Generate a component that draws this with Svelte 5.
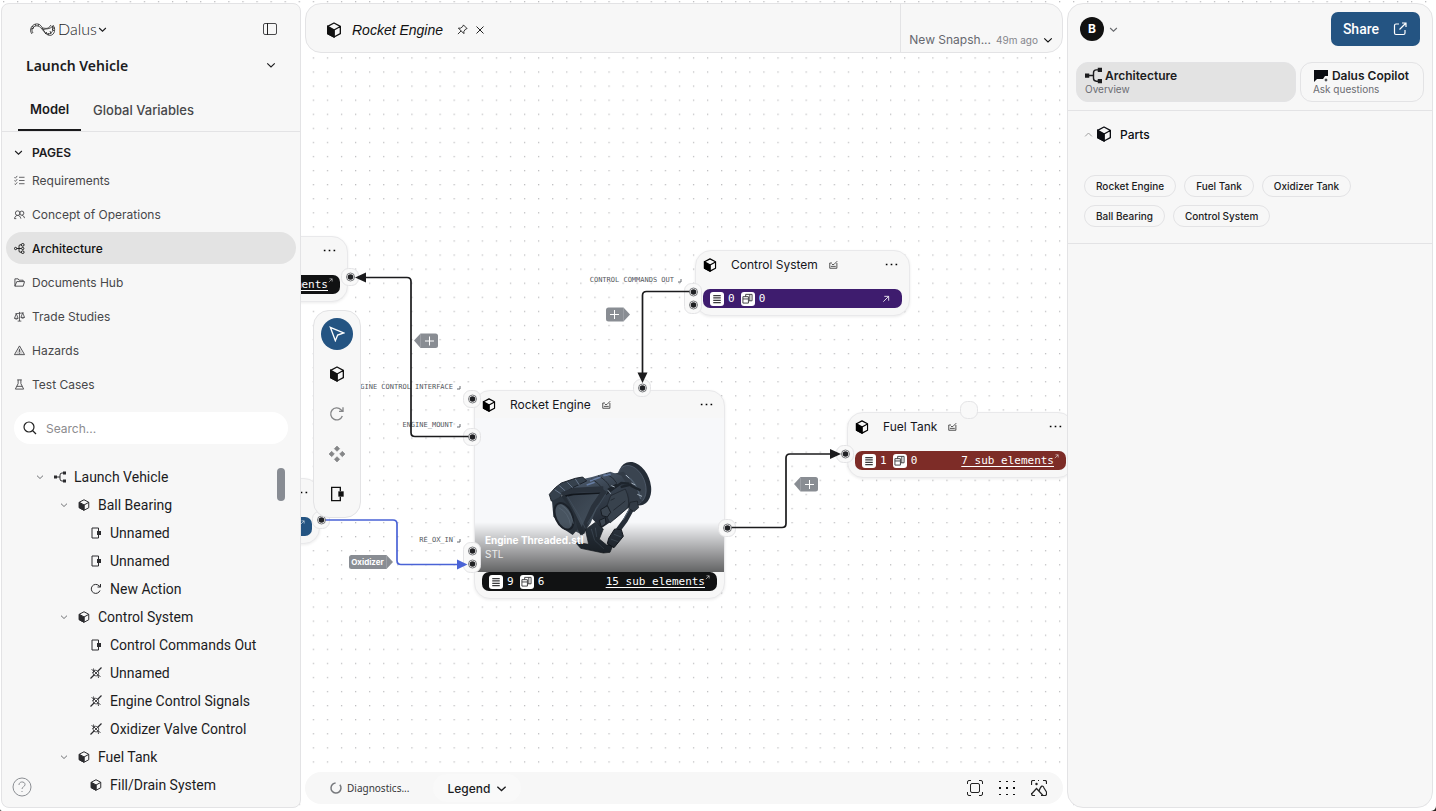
<script>
  const pages = [
    { name: 'Requirements', icon: 'checks' },
    { name: 'Concept of Operations', icon: 'people' },
    { name: 'Architecture', icon: 'share', active: true },
    { name: 'Documents Hub', icon: 'folder' },
    { name: 'Trade Studies', icon: 'scales' },
    { name: 'Hazards', icon: 'hazard' },
    { name: 'Test Cases', icon: 'flask' }
  ];
  const tree = [
    { name: 'Launch Vehicle', level: 0, icon: 'tree' },
    { name: 'Ball Bearing', level: 1, icon: 'cube' },
    { name: 'Unnamed', level: 2, icon: 'port' },
    { name: 'Unnamed', level: 2, icon: 'port' },
    { name: 'New Action', level: 2, icon: 'action' },
    { name: 'Control System', level: 1, icon: 'cube' },
    { name: 'Control Commands Out', level: 2, icon: 'port' },
    { name: 'Unnamed', level: 2, icon: 'link' },
    { name: 'Engine Control Signals', level: 2, icon: 'link' },
    { name: 'Oxidizer Valve Control', level: 2, icon: 'link' },
    { name: 'Fuel Tank', level: 1, icon: 'cube' },
    { name: 'Fill/Drain System', level: 2, icon: 'cube' }
  ];
  const parts = ['Rocket Engine', 'Fuel Tank', 'Oxidizer Tank', 'Ball Bearing', 'Control System'];
  const tools = [
    { name: 'Select', icon: 'cursor', active: true },
    { name: 'Part', icon: 'cube' },
    { name: 'Action', icon: 'action', muted: true },
    { name: 'Group', icon: 'diamonds', muted: true },
    { name: 'Port', icon: 'port' }
  ];
  const nodes = [
    { id: 'a', x: 274, y: 236, w: 74, tone: 'black', sub: 'ments' },
    { id: 'b', x: 246, y: 478, w: 74, tone: 'blue' },
    { id: 'c', name: 'Control System', x: 695, y: 250, w: 215, tone: 'purple', attrs: 0, ports: 0 },
    { id: 'd', name: 'Rocket Engine', x: 474, y: 390, w: 251, tone: 'black', attrs: 9, ports: 6, sub: '15 sub elements', model: true },
    { id: 'e', name: 'Fuel Tank', x: 847, y: 412, w: 227, tone: 'red', attrs: 1, ports: 0, sub: '7 sub elements' }
  ];
  const docks = [
    { x: 350, y: [277] }, { x: 321, y: [520] }, { x: 472, y: [399] }, { x: 472, y: [437] },
    { x: 472, y: [551, 564] }, { x: 642, y: [388] }, { x: 693, y: [292, 305] },
    { x: 727, y: [528] }, { x: 845, y: [454] }
  ];
  const portLabels = [
    { text: 'CONTROL COMMANDS OUT', x: 674, y: 282 },
    { text: 'ENGINE CONTROL INTERFACE', x: 453, y: 389 },
    { text: 'ENGINE_MOUNT', x: 453, y: 427 },
    { text: 'RE_OX_IN', x: 453, y: 542 }
  ];
</script>

{#snippet icon(name, size)}
  <svg class="ico" width={size} height={size} viewBox="0 0 24 24" fill="none" stroke="currentColor" stroke-width="2" aria-hidden="true">
    {#if name === 'cube'}
      <path d="M12 1.5 21.5 6.5V17.5L12 22.5 2.5 17.5V6.5Z M12 12 21.5 6.8 M12 12V22" stroke-linejoin="round" />
      <path d="M2.5 6.5 12 11.8V22.5L2.5 17.5Z" fill="currentColor" />
    {:else if name === 'chevron'}
      <path d="M3 8 12 16.500l9-8.500" stroke-width="2.800" />
    {:else if name === 'chevron-up'}
      <path d="M3 17 12 8l9 9" stroke-width="2.500" />
    {:else if name === 'tree'}
      <path d="M3 12H12M20 4H16Q12 4 12 8V16Q12 20 16 20H20" />
      <path d="M0 9H6V15H0ZM18 1H24V7H18ZM18 17H24V23H18Z" fill="currentColor" stroke="none" />
    {:else if name === 'port'}
      <path d="M17 8V2H4V22H17V16" />
      <path d="M14 8H22V16H14Z" fill="currentColor" stroke="none" />
    {:else if name === 'action'}
      <path d="M20 15A9 9 0 1 1 18 5.500L21 8M21 2V8H15" />
    {:else if name === 'link'}
      <path d="M1 23 9 15M15 9 23 1" stroke-width="2.400" />
      <path d="M8 8 16 16M8 8C5 11 6 15 9 17M9 17C12 18 15 18 16 16M8 8C9 6 12 6 15 8C18 11 18 14 16 16M3 5 8 8M7 3 8 8M21 19 16 16M17 22 16 16M8 8 5 12M9 15 15 9" stroke-width="1.700" />
    {:else if name === 'checks'}
      <path d="M1 5 3 7 7 2M1 12 3 14 7 9M1 19 3 21 7 16M11 5H23M11 12H23M11 19H23" stroke-width="1.800" />
    {:else if name === 'people'}
      <circle cx="8" cy="9" r="5" /><circle cx="17" cy="9" r="4.500" />
      <path d="M1 21C2 16 5 14 8 14S14 16 15 21M17 14C20 14 22 16 23 20M1 21H5" />
    {:else if name === 'share'}
      <circle cx="3.500" cy="12" r="2.500" /><circle cx="19" cy="4" r="3" /><circle cx="19" cy="12" r="2.500" /><circle cx="19" cy="20" r="3" />
      <path d="M6 12H16M16 4H13Q11 4 11 7V17Q11 20 13 20H16" />
    {:else if name === 'folder'}
      <path d="M2 20V4H9L11 7H20V10M2 20 6 10H23L20 20Z" stroke-linejoin="round" />
    {:else if name === 'scales'}
      <path d="M12 2V22M8 22H16M3 6 21 4M5 6 1 16H9ZM19 4 15 14H23ZM1 16Q5 20 9 16M15 14Q19 18 23 14" stroke-width="1.800" />
    {:else if name === 'hazard'}
      <path d="M12 2 23 21H1ZM12 9V15M12 17V19" stroke-linejoin="round" />
      <path d="M12 6 19 19H5Z" fill="currentColor" opacity=".25" stroke="none" />
    {:else if name === 'flask'}
      <path d="M7 2H17M9 2V10L3 22H21L15 10V2M6 16H18" />
    {:else if name === 'diamonds'}
      <path d="M12 0 16 4 12 8 8 4ZM12 16 16 20 12 24 8 20ZM4 8 8 12 4 16 0 12ZM20 8 24 12 20 16 16 12Z" fill="currentColor" stroke="currentColor" stroke-width="1" stroke-linejoin="round" />
    {:else if name === 'cursor'}
      <path d="M2 2 22 10.500 13 13.500 9.500 22Z" stroke-linejoin="miter" />
    {:else if name === 'edit'}
      <path d="M8 8H2V22H21V8M5 17H18M8 12H13L22 3" stroke-width="2.200" />
    {:else if name === 'lines'}
      <path d="M3 4H21M3 9.500H21M3 15H21M3 20.500H21" stroke-width="3" />
    {:else if name === 'blocks'}
      <path d="M2 8H14V22H2ZM8 8V3H22V17H14M17 3V17M2 13H14" />
    {:else if name === 'dots'}
      <path d="M1.500 10.500H4.500V13.500H1.500ZM10.500 10.500H13.500V13.500H10.500ZM19.500 10.500H22.500V13.500H19.500Z" fill="currentColor" stroke="none" />
    {:else if name === 'arrow'}
      <path d="M4 20 20 4M7 4H20V17" stroke-width="2.500" />
    {/if}
  </svg>
{/snippet}

<div class="app">
  <div class="canvas">
    <svg class="layer" aria-hidden="true">
      <defs>
        <pattern id="dots" width="20" height="20" patternUnits="userSpaceOnUse" patternTransform="translate(3 1) scale(0.704)">
          <circle cx="1" cy="1" r="0.8" fill="#77777b" />
        </pattern>
      </defs>
      <rect width="100%" height="100%" fill="url(#dots)" />
    </svg>

    <svg class="layer labels">
      {#each portLabels as l}
        <text x={l.x} y={l.y} text-anchor="end">{l.text}</text>
        <path d="M{l.x + 4} {l.y}h3v-3" fill="none" stroke="#666a70" />
      {/each}
    </svg>

    {#each nodes as n (n.id)}
      <article class="node" style="left:{n.x}px;top:{n.y}px;width:{n.w}px">
        <header>
          {#if n.name}
            <span class="cube">{@render icon('cube', 14)}</span>
            <h3>{n.name}</h3>
            <span class="edit">{@render icon('edit', 9)}</span>
          {/if}
          <button class="more" aria-label="Node menu">{@render icon('dots', 13)}</button>
        </header>
        {#if n.model}
          <div class="model">
            <svg width="116" height="106" viewBox="0 0 348 318" aria-hidden="true">
              <defs>
                <linearGradient id="metal" x1="0" y1="0" x2=".5" y2="1">
                  <stop offset="0" stop-color="#5b6b82" /><stop offset=".45" stop-color="#3a4552" /><stop offset="1" stop-color="#232a34" />
                </linearGradient>
                <linearGradient id="plate" x1="0" y1="0" x2="1" y2="1">
                  <stop offset="0" stop-color="#313a45" /><stop offset="1" stop-color="#4a5764" />
                </linearGradient>
              </defs>
              <ellipse cx="278" cy="86" rx="46" ry="68" transform="rotate(-22 278 86)" fill="#252d37" />
              <ellipse cx="269" cy="89" rx="40" ry="60" transform="rotate(-22 269 89)" fill="#3a4450" stroke="#566373" stroke-width="2" />
              <path d="M205 58 245 50Q280 80 300 140L262 158 232 150Z" fill="#323b46" />
              <path d="M250 60Q285 80 296 132" stroke="#505e6e" stroke-width="4" fill="none" />
              <path d="M62 112 96 78 150 66 205 50 238 62Q268 100 262 155L222 190 178 220 120 160Z" fill="url(#metal)" />
              <path d="M22 118 40 98 58 84 100 70 122 66 134 78 96 96 60 118 44 140 28 138Z" fill="#36414d" stroke="#1c222a" stroke-width="3" />
              <path d="M38 104 56 116M52 92 70 108M76 82 92 98M100 72 112 90" stroke="#66758a" stroke-width="3" />
              <path d="M148 72Q172 84 182 104M168 62Q194 76 204 96M192 56Q216 68 224 84" stroke="#232a33" stroke-width="3" fill="none" />
              <path d="M144 78 176 66M184 62 206 58M134 90 158 82" stroke="#7f9cd0" stroke-width="5" opacity=".6" />
              <path d="M190 118 238 84 262 86M198 104 226 88M236 96 270 88M266 92 296 106" stroke="#1d242c" stroke-width="7" fill="none" />
              <path d="M252 60 262 70M198 106 206 116M208 92 218 96M268 84 280 90M286 118 300 124" stroke="#a4b0bc" stroke-width="3" />
              <path d="M206 122 250 102Q264 132 258 158L204 204 188 172Z" fill="#38424d" stroke="#1c222a" stroke-width="2" />
              <path d="M206 136 218 130M214 166 250 138" stroke="#232a33" stroke-width="3" />
              <path d="M176 164 196 152 206 172 196 186 180 182ZM172 196 190 188 192 206 178 216Z" fill="#3b4550" stroke="#171c23" stroke-width="3" />
              <path d="M66 118 186 106 146 204 122 240 98 228Z" fill="url(#plate)" />
              <path d="M60 120 96 106 184 102" stroke="#2a323c" stroke-width="16" fill="none" />
              <path d="M66 124 94 118 180 114" stroke="#12171d" stroke-width="5" fill="none" />
              <path d="M188 106 154 156 120 232" stroke="#2a323c" stroke-width="15" fill="none" />
              <path d="M196 110 162 164 136 206" stroke="#465361" stroke-width="2" fill="none" />
              <path d="M62 122 94 180 122 238" stroke="#262e37" stroke-width="14" fill="none" />
              <path d="M76 124 110 180 130 220" stroke="#465361" stroke-width="2" fill="none" />
              <path d="M30 138 58 124 92 170 108 222 92 240 56 216 34 184Z" fill="#2b343e" />
              <ellipse cx="66" cy="184" rx="25" ry="42" transform="rotate(-24 66 184)" fill="#485460" stroke="#1c222a" stroke-width="6" />
              <path d="M50 158Q80 172 86 212M58 150Q88 170 94 206" stroke="#5b6875" stroke-width="2" fill="none" />
              <path d="M130 224 160 202 184 222 172 252 194 270 214 268 204 292 184 294 116 280 100 262 140 268Z" fill="#29323c" stroke="#171c23" stroke-width="2" />
              <path d="M148 222 158 256 186 282M160 218 164 246" stroke="#3f4b58" stroke-width="3" fill="none" />
              <path d="M272 156 250 196 228 226" stroke="#262e38" stroke-width="15" fill="none" />
              <path d="M266 156 244 194" stroke="#5b6979" stroke-width="3" />
              <path d="M264 142 286 138 290 158 276 170 260 160Z" fill="#323b46" stroke="#171c23" stroke-width="2" />
              <path d="M218 222 238 224 244 244 216 278 196 266 200 250Z" fill="#2d3641" stroke="#171c23" stroke-width="3" />
              <path d="M206 252 228 260M216 238 238 246" stroke="#44515e" stroke-width="3" />
            </svg>
            <div class="caption"><strong>Engine Threaded.stl</strong><span>STL</span></div>
          </div>
        {/if}
        <footer class={n.tone}>
          {#if n.name}
            <i>{@render icon('lines', 10)}</i><span>{n.attrs}</span>
            <i>{@render icon('blocks', 11)}</i><span>{n.ports}</span>
          {/if}
          {#if n.sub}
            <a href="#{n.id}">{n.sub}</a><sup>{@render icon('arrow', 5)}</sup>
          {:else if n.name}
            <a class="open" href="#{n.id}" aria-label="Open element">{@render icon('arrow', 8)}</a>
          {:else}
            <sup class="end">{@render icon('arrow', 5)}</sup>
          {/if}
        </footer>
      </article>
    {/each}

    <svg class="layer" aria-hidden="true">
      <g fill="#f9f9f9" stroke="#e4e4e6">
        <rect x="960.5" y="401.5" width="17" height="17" rx="7" />
        {#each docks as d}
          <rect x={d.x - 8.5} y={d.y[0] - 8.5} width="17" height={17 + d.y[d.y.length - 1] - d.y[0]} rx="7" />
        {/each}
      </g>
      <g fill="none" stroke="#1b1b1d" stroke-width="1.7">
        <path d="M472 436.500H415Q411 436.500 411 432.500V281.500Q411 277.500 407 277.500H362" />
        <path d="M693 291.500H646.500Q642.500 291.500 642.500 295.500V376" />
        <path d="M727 527.500H782Q786 527.500 786 523.500V458Q786 454 790 454H832" />
        <path d="M321 520H393Q397 520 397 524V560.500Q397 564.500 401 564.500H460" stroke="#4a63d6" />
      </g>
      <g fill="#1b1b1d">
        <path d="M355 277.500 366 272.500V282.500Z" /><path d="M642.500 383 637.500 372.500H647.500Z" /><path d="M841 454 830 449V459Z" />
        <path d="M467.500 564.500 457 559.500V569.500Z" fill="#4a63d6" />
      </g>
      {#each docks as d}
        {#each d.y as y}
          <circle cx={d.x + 0.5} cy={y} r="4" fill="#fff" stroke="#55585c" stroke-width="0.8" />
          <circle cx={d.x + 0.5} cy={y} r="2.8" fill="#202124" />
        {/each}
      {/each}
      <g fill="#898d93">
        <path d="M414 340.500 420.500 333.500H435.500Q438 333.500 438 336V345.500Q438 348 435.500 348H420.500Z" />
        <path d="M794 484 800.500 477H815.500Q818 477 818 479.500V489Q818 491.500 815.500 491.500H800.500Z" />
        <path d="M630 314.500 623.500 307.500H608.500Q606 307.500 606 310V319Q606 321.500 608.500 321.500H623.500Z" />
        <path d="M393 562 386.500 555H351.500Q349 555 349 557.500V566.500Q349 569 351.500 569H386.500Z" />
      </g>
      <path d="M420.500 334V348M800.500 477V491M623.500 308V321M386.500 555V569" stroke="#a5a8ad" stroke-width="0.7" />
      <path d="M425 341H434M429.500 336.500V345.500M805 484.500H814M809.500 480V489M610 314.500H619M614.500 310V319" stroke="#fff" />
      <text class="tag" x="367.500" y="565" text-anchor="middle">Oxidizer</text>
    </svg>
  </div>

  <div class="shell">
    <aside class="sidebar">
      <div class="brand">
        <button class="logo">
          <svg width="27" height="15" viewBox="0 0 27 15" fill="none" stroke="#222" stroke-width="0.8" aria-hidden="true">
            <path d="M3 12C-1 7 4 1 9 2C14 3 14 11 19 13C24 15 28 9 24 3" />
            <path d="M4 11C1 7 5 3 9 4C13 5 15 12 19 12C23 12 25 8 23 4" />
            <path d="M2 7 5 6M3 4 5 6M6 2 7 4M10 2 9 4M16 12 18 10M19 13 20 11M22 12 21 9M25 9 23 7M26 6 23 6" />
            <path d="M13 6C16 6 19 8 22 3M14 8C17 6 20 8 24 4" />
          </svg>
          <span>Dalus</span>{@render icon('chevron', 9)}
        </button>
        <button aria-label="Toggle sidebar">
          <svg class="ico" width="14" height="12" viewBox="0 0 14 12" fill="none" stroke="#4a4a4c" aria-hidden="true"><rect x=".5" y=".5" width="13" height="11" rx="1.500" /><path d="M4.500 0V12" stroke="#222" /></svg>
        </button>
      </div>
      <button class="project"><span>Launch Vehicle</span>{@render icon('chevron', 10)}</button>
      <nav class="tabs"><button class="on">Model</button><button>Global Variables</button></nav>
      <button class="section">{@render icon('chevron', 9)}<span>PAGES</span></button>
      <nav class="pages">
        {#each pages as p}
          <a href="#{p.icon}" class:active={p.active}>{@render icon(p.icon, 11)}<span>{p.name}</span></a>
        {/each}
      </nav>
      <label class="search">
        <svg class="ico" width="14" height="14" viewBox="0 0 14 14" fill="none" stroke="#222" stroke-width="1.200" aria-hidden="true"><circle cx="6" cy="6" r="5" /><path d="M9.500 9.500 13 13" /></svg>
        <input type="text" placeholder="Search..." aria-label="Search" />
      </label>
      <div class="tree">
        <ul>
          {#each tree as t}
            <li class="l{t.level}">
              {#if t.level < 2}<button aria-label="Collapse">{@render icon('chevron', 8)}</button>{/if}
              <span class="kind">{@render icon(t.icon, 12)}</span>
              <span>{t.name}</span>
            </li>
          {/each}
        </ul>
        <div class="thumb"></div>
      </div>
      <button class="help" aria-label="Help">
        <svg width="20" height="20" viewBox="0 0 20 20" fill="none" stroke="#8b8e93" aria-hidden="true"><circle cx="10" cy="10" r="9" /><path d="M7 8C7 4 13 4 13 7.500C13 10 10 9.500 10 12M10 14V15" /></svg>
      </button>
    </aside>

    <main>
      <header class="topbar">
        <div class="doc">
          {@render icon('cube', 16)}<em>Rocket Engine</em>
          <button aria-label="Pin"><svg class="ico" width="11" height="11" viewBox="0 0 12 12" fill="none" stroke="#222" aria-hidden="true"><path d="M7 1 11 5 9.500 5.500 7.500 8 7.500 10.500 1.500 4.500 4 4.500 6.500 2.500ZM4.500 7.500 1 11" /></svg></button>
          <button aria-label="Close"><svg class="ico" width="8" height="8" viewBox="0 0 8 8" stroke="#222" aria-hidden="true"><path d="M.5 .5 7.500 7.500M7.500 .5 .5 7.500" /></svg></button>
        </div>
        <button class="snap"><span>New Snapsh...</span><small>49m ago</small><span class="mark">{@render icon('chevron', 10)}</span></button>
      </header>
      <div class="stage">
        <div class="toolbar">
          {#each tools as t}
            <button class:active={t.active} class:muted={t.muted} aria-label={t.name}>{@render icon(t.icon, 16)}</button>
          {/each}
        </div>
      </div>
      <footer class="dockbar">
        <div class="status">
          <span class="diag"><svg class="ico" width="12" height="12" viewBox="0 0 12 12" fill="none" stroke-width="1.500" aria-hidden="true"><circle cx="6" cy="6" r="5" stroke="#77797d" stroke-dasharray="26 6" transform="rotate(-40 6 6)" /></svg>Diagnostics...</span>
          <button class="legend">Legend {@render icon('chevron', 11)}</button>
          <span class="grow"></span>
          <button aria-label="Fit view"><svg class="ico" width="16" height="16" viewBox="0 0 16 16" fill="none" stroke="#222" aria-hidden="true"><rect x="3.500" y="3.500" width="9" height="9" rx="1.500" /><path d="M.5 4V2Q.5 .5 2 .5H4M12 .5H14Q15.500 .5 15.500 2V4M15.500 12V14Q15.500 15.500 14 15.500H12M4 15.500H2Q.5 15.500 .5 14V12" /></svg></button>
          <button aria-label="Grid"><svg class="ico" width="16" height="16" viewBox="0 0 16 16" fill="#111" aria-hidden="true"><path d="M0 1h2v1H0zM7 1h2v1H7zM14 1h2v1h-2zM0 7h2v2H0zM7 7h2v2H7zM14 7h2v2h-2zM0 14h2v1H0zM7 14h2v1H7zM14 14h2v1h-2z" /></svg></button>
          <button aria-label="Export image"><svg class="ico" width="16" height="16" viewBox="0 0 16 16" fill="none" stroke="#222" stroke-width="1.200" aria-hidden="true"><path d="M.5 5V2Q.5 .5 2 .5H4M12 .5H14Q15.500 .5 15.500 2V4M7 .5H8M.5 14 5.500 8.500 12 15.500M8 11C10 5 12 5 13 8L15.500 12V14Q15.500 15.500 14 15.500H10M4 15.500H2Q.5 15.500 .5 13" /><circle cx="5.500" cy="4" r=".6" fill="#222" /></svg></button>
        </div>
      </footer>
    </main>

    <aside class="panel">
      <div class="account">
        <button class="user"><b>B</b>{@render icon('chevron', 9)}</button>
        <button class="share">Share<svg class="ico" width="14" height="14" viewBox="0 0 14 14" fill="none" stroke="#fff" stroke-width="1.200" aria-hidden="true"><path d="M6 2H3Q1.500 2 1.500 3.500V11Q1.500 12.500 3 12.500H10.500Q12 12.500 12 11V8M6.500 7.500 13 1M9 1H13V5" /></svg></button>
      </div>
      <div class="modes">
        <button class="on"><span>{@render icon('tree', 17)}Architecture</span><small>Overview</small></button>
        <button><span><svg class="ico" width="16" height="14" viewBox="0 0 16 14" fill="#0b0d12" aria-hidden="true"><path d="M1 1H15V7H12L10 10H4L1 13ZM13 9L13.600 10.400 15 11 13.600 11.600 13 13 12.400 11.600 11 11 12.400 10.400Z" /></svg>Dalus Copilot</span><small>Ask questions</small></button>
      </div>
      <section>
        <h2><span class="fold">{@render icon('chevron-up', 9)}</span>{@render icon('cube', 16)}<span>Parts</span></h2>
        <div class="pills">{#each parts as p}<button>{p}</button>{/each}</div>
      </section>
    </aside>
  </div>
</div>

<style>
  :global(body) { margin: 0; background: #2a2521; }
  .app { position: relative; height: 100vh; overflow: hidden; background: #fff; border-radius: 0 0 5px 2px; font-family: Inter, "Liberation Sans", sans-serif; font-size: 12px; color: #1c1c1e; }
  .app * { box-sizing: border-box; }
  button { border: 0; background: none; padding: 0; font: inherit; color: inherit; display: flex; align-items: center; }
  a { color: inherit; text-decoration: none; }
  .ico { flex: none; display: block; }

  .canvas { position: absolute; inset: 0; }
  .layer { position: absolute; inset: 0; width: 100%; height: 100%; }
  .labels text { font: 7px "DejaVu Sans Mono", monospace; fill: #55585e; }
  .tag { font: 700 8px Inter, sans-serif; fill: #fff; }
  .node { position: absolute; background: #f7f7f7; border: 1px solid #e9e9eb; border-radius: 16px; box-shadow: 0 1px 3px #00000014; padding-bottom: 7px; }
  .node header { display: flex; align-items: center; height: 27px; padding: 0 11px 0 7px; color: #000; }
  .node header + footer { margin-top: 11px; }
  .node h3 { margin: 0 11px 0 14px; font-size: 12px; font-weight: 400; white-space: nowrap; color: #16161c; }
  .node .edit { color: #333; }
  .more { margin-left: auto; }
  .node footer { display: flex; align-items: center; gap: 4px; height: 19px; margin: 0 7px; padding: 0 7px; border-radius: 7px; color: #fff; font: 11px "DejaVu Sans Mono", monospace; }
  .node footer i { display: flex; align-items: center; justify-content: center; width: 14px; height: 14px; border-radius: 3px; background: #fff; color: #3a3a3c; }
  .node footer span { margin-right: 2px; }
  .node footer a { margin-left: auto; text-decoration: underline; text-underline-offset: 2px; white-space: nowrap; }
  .node footer .open { margin-right: 5px; }
  .node footer sup { margin: 0 0 8px -4px; }
  .node footer .end { margin-left: auto; }
  .black { background: #111213; }
  .blue { background: #245482; }
  .purple { background: #3e1c6e; }
  .red { background: #7d2c27; }
  .model { position: relative; display: flex; justify-content: center; height: 154px; padding: 37px 0 0 3px; background: #f7f8fa; }
  .model svg { margin-left: -2px; }
  .caption { position: absolute; inset: auto 0 0 0; display: flex; flex-direction: column; height: 50px; padding: 11px 10px 0; background: linear-gradient(#0000, #0009); color: #fff; font-size: 10px; line-height: 14px; }
  .caption strong { font-weight: 700; }
  .caption span { color: #ececec; }

  .shell { position: relative; display: flex; height: 100%; pointer-events: none; }
  .shell button, .shell a, .shell input { pointer-events: auto; }
  .sidebar { position: relative; display: flex; flex-direction: column; width: 300px; margin: 3px 0 3px 1px; background: #f7f7f7; border: 1px solid #e3e3e5; border-radius: 8px; }
  .brand { display: flex; align-items: center; justify-content: space-between; height: 48px; padding: 2px 23px 0 27px; }
  .logo span { margin: 0 1px 1px 2px; font: 300 16px Lato, sans-serif; }
  .project { height: 26px; padding: 0 24px; justify-content: space-between; font: 600 14px "Noto Sans", Inter, sans-serif; }
  .tabs { display: flex; height: 54px; padding-left: 16px; border-bottom: 1px solid #e3e3e5; font-size: 13px; font-weight: 500; color: #47474a; }
  .tabs button { padding: 11px 12px 0; }
  .tabs .on { font-weight: 600; color: #1a1a1c; border-bottom: 2px solid #1a1a1c; }
  .section { gap: 9px; height: 32px; padding: 8px 12px 0; font-weight: 600; }
  .pages { display: flex; flex-direction: column; gap: 2px; padding: 0 4px; }
  .pages a { display: flex; align-items: center; gap: 7px; height: 32px; padding: 0 8px; border-radius: 16px; color: #47474a; }
  .pages .active { background: #e3e3e3; color: #111; font-weight: 500; }
  .search { display: flex; align-items: center; gap: 9px; height: 32px; margin: 12px 12px 19px; padding: 0 9px; border-radius: 16px; background: #fff; }
  .search input { flex: 1; min-width: 0; border: 0; outline: 0; padding: 0; background: none; font: 12px Inter, sans-serif; }
  .search input::placeholder { color: #8b8b8e; }
  .tree { display: flex; flex: 1; min-height: 0; overflow: hidden; }
  ul { flex: 1; margin: 0; padding: 0; list-style: none; font: 14px Roboto, sans-serif; }
  li { display: flex; align-items: center; height: 28px; white-space: nowrap; }
  li button { justify-content: center; width: 20px; color: #66686c; }
  .kind { width: 20px; color: #2b2b2e; }
  .l0 { padding-left: 28px; }
  .l0 button, .l1 button { margin-right: 4px; }
  .l1 { padding-left: 52px; }
  .l2 { padding-left: 88px; }
  .thumb { width: 8px; height: 33px; margin: 5px 15px 0 0; border-radius: 4px; background: #888c93; }
  .help { position: absolute; left: 10px; bottom: 10px; }

  main { display: flex; flex: 1; flex-direction: column; min-width: 0; }
  .topbar { display: flex; justify-content: space-between; height: 50px; margin: 3px 4px 0; border: 1px solid #e3e3e5; border-radius: 16px; background: #f7f7f7; }
  .doc { display: flex; align-items: center; padding: 3px 20px 0; color: #111; }
  .doc em { margin: 0 14px 0 10px; font: italic 14px "Liberation Sans", sans-serif; }
  .doc button { margin-right: 8px; }
  .snap { align-items: flex-end; gap: 5px; padding: 0 9px 5px 8px; border-left: 1px solid #e3e3e5; color: #66686f; }
  .snap small { font-size: 10px; line-height: 14px; color: #85868c; }
  .snap .mark { padding-bottom: 2px; color: #111; }
  .stage { display: flex; flex: 1; align-items: center; padding: 10px 0 0 12px; }
  .toolbar { display: flex; flex-direction: column; gap: 8px; padding: 7px; border: 1px solid #e3e3e5; border-radius: 16px; background: #f7f7f7; color: #111; }
  .toolbar button { justify-content: center; width: 32px; height: 32px; border-radius: 50%; }
  .toolbar .active { background: #245482; color: #fff; }
  .toolbar .muted { color: #858688; }
  .dockbar { padding: 7px 4px; background: #fff; }
  .status { display: flex; align-items: center; gap: 16px; height: 32px; padding: 0 16px 0 25px; border-radius: 16px; background: #f7f7f7; }
  .diag { display: flex; align-items: center; gap: 5px; font: 10px "Noto Sans", sans-serif; color: #37373a; }
  .legend { gap: 6px; height: 28px; margin-left: 8px; padding: 0 14px; border-radius: 14px; background: #f9f9f9; font-weight: 500; }
  .grow { flex: 1; }

  .panel { width: 366px; margin: 3px 3px 3px 0; border: 1px solid #e3e3e5; border-radius: 16px; background: #f7f7f7; }
  .account { display: flex; align-items: center; justify-content: space-between; padding: 8px 12px 0; }
  .user { gap: 5px; color: #66686c; }
  .user b { width: 24px; height: 24px; border-radius: 50%; background: #111; color: #fff; font-size: 12px; line-height: 24px; text-align: center; }
  .share { gap: 14px; height: 34px; padding: 0 13px 0 12px; border-radius: 7px; background: #245482; color: #fff; font: 500 14px Roboto, sans-serif; }
  .modes { display: flex; gap: 4px; padding: 16px 8px 8px; border-bottom: 1px solid #e3e3e5; }
  .modes button { flex-direction: column; align-items: flex-start; justify-content: center; height: 40px; padding: 0 14px 0 12px; border: 1px solid #e3e3e5; border-radius: 12px; }
  .modes .on { flex: 1; padding: 0 8px; background: #e3e3e3; }
  .modes span { display: flex; align-items: center; gap: 3px; height: 14px; font-weight: 600; white-space: nowrap; }
  .modes small { font-size: 10px; line-height: 13px; color: #6b6c72; }
  section { padding: 13px 16px 16px; border-bottom: 1px solid #e3e3e5; }
  h2 { display: flex; align-items: center; height: 20px; margin: 0 0 31px; font-size: 12px; font-weight: 500; color: #0b0d12; }
  h2 .fold { margin-right: 3px; color: #999; }
  h2 span:last-child { margin-left: 8px; }
  .pills { display: flex; flex-wrap: wrap; gap: 8px; }
  .pills button { height: 22px; padding: 0 11px; border: 1px solid #e3e3e5; border-radius: 11px; font-size: 10px; font-weight: 500; }
</style>
